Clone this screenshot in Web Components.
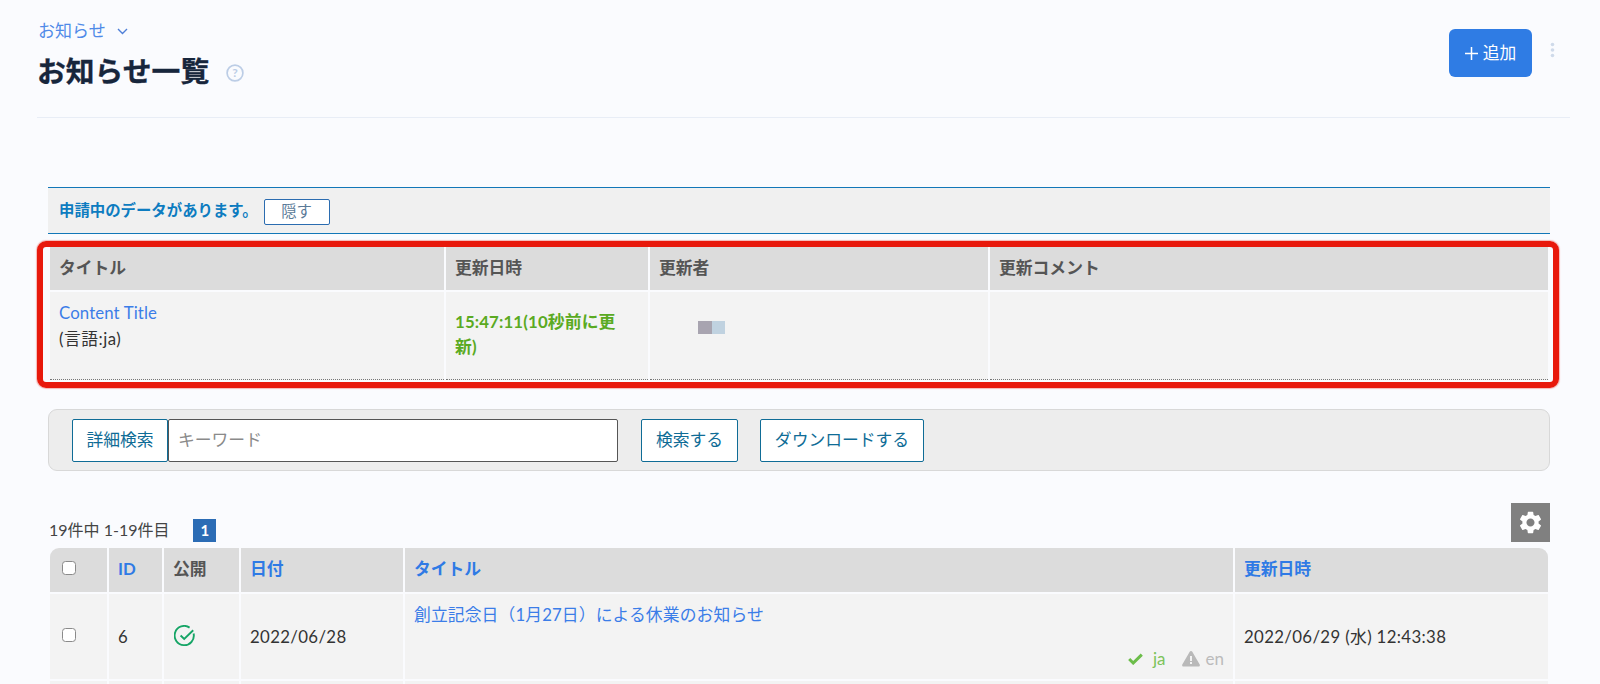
<!DOCTYPE html>
<html lang="ja">
<head>
<meta charset="utf-8">
<title>お知らせ一覧</title>
<style>
  html, body { margin: 0; height: 684px; overflow: hidden; background: #fafbfe; }
  body { font: 16.8px/1.5 Lato, "Noto Sans CJK JP", sans-serif; color: #333; }
  a { color: #3b7de8; text-decoration: none; letter-spacing: .12px; }
  .updated { color: #5aaa22; font-weight: 700; letter-spacing: .15px; }
  .sortable { color: #2f7ae5; }
  .wide { letter-spacing: .35px; }
  .mask { display: flex; margin: 14px 0 0 48px; padding-top: 15px; }
  .mask i { display: block; width: 13.5px; height: 13px; background: #a8a4b0; }
  .mask i + i { background: #c0d2e0; }
  .lang { position: absolute; right: 9px; bottom: 10px; display: flex; align-items: center; gap: 6px; font-size: 17px; line-height: 20px; }
  .lang span { color: #7cc35b; margin-right: 10px; margin-left: 4px; }
  .lang span.off { color: #bbb; margin: 0; }
  input[type=checkbox] { appearance: none; display: block; width: 14px; height: 14px; margin: 0; background: #fff; border: 1.3px solid #8a8a8a; border-radius: 3.5px; }
</style>
</head>
<body>

<template id="page-head-tpl">
  <style>
    :host { display: flex; justify-content: space-between; height: 117px; margin: 0 30px 0 37px; border-bottom: 1px solid #e8edf6; box-sizing: content-box; }
    .crumb { display: flex; align-items: center; gap: 11px; color: #4f8ae8; height: 20px; margin-top: 21px; margin-left: 1px; font-size: 17px; }
    h1 { display: flex; align-items: center; gap: 17px; margin: 9px 0 0; font-size: 28.8px; line-height: 42px; font-weight: 700; color: #17263c; -webkit-text-stroke: .3px #17263c; }
    .actions { display: flex; align-items: flex-start; padding-top: 29px; }
    .add { display: flex; align-items: center; justify-content: center; gap: 5px; width: 83px; height: 48px; background: #2f7ce4; color: #fff; border-radius: 6px; }
    .kebab { display: block; margin: 13px 15px 0 18px; }
  </style>
  <div>
    <div class="crumb"><span>お知らせ</span>
      <svg width="11" height="7" viewBox="0 0 11 7" fill="none" stroke="#4f7fd8" stroke-width="1.4"><path d="M1 1l4.5 4.5L10 1"/></svg>
    </div>
    <h1><span>お知らせ一覧</span>
      <svg width="18" height="18" viewBox="0 0 18 18" style="margin-top:4px"><circle cx="9" cy="9" r="7.9" fill="none" stroke="#bccde6" stroke-width="1.7"/><text x="9" y="13.2" text-anchor="middle" font-family="Lato, sans-serif" font-size="12" font-weight="700" fill="#bccde6">?</text></svg>
    </h1>
  </div>
  <div class="actions">
    <div class="add"><svg width="13" height="13" viewBox="0 0 13 13" stroke="#fff" stroke-width="1.5"><path d="M6.5 0v13M0 6.5h13"/></svg><span>追加</span></div>
    <svg class="kebab" width="5" height="16" viewBox="0 0 5 16" fill="#cfdaea"><circle cx="2.5" cy="2.5" r="1.8"/><circle cx="2.5" cy="8" r="1.8"/><circle cx="2.5" cy="13.5" r="1.8"/></svg>
  </div>
</template>

<template id="notice-bar-tpl">
  <style>
    :host { display: flex; align-items: center; gap: 6px; height: 45px; margin: 69px 50px 0 48px; padding-left: 11px; background: #f0f0f0; border-top: 1px solid #1277b8; border-bottom: 1px solid #1277b8; font-size: 15.4px; }
    b { color: #0d7cc0; }
    span { display: flex; align-items: center; justify-content: center; box-sizing: border-box; width: 66px; height: 26px; margin-top: 3px; background: #fff; border: 1px solid #2b6cb0; border-radius: 2px; color: #5a7a98; }
  </style>
  <b><slot></slot></b><span>隠す</span>
</template>

<template id="data-grid-tpl">
  <style>
    :host { display: grid; gap: 2px; margin: 0 52px 0 50px; }
    :host([rounded]) { border-radius: 9px 9px 0 0; overflow: hidden; }
  </style>
  <slot></slot>
</template>

<template id="grid-cell-tpl">
  <style>
    :host { display: flex; align-items: center; position: relative; box-sizing: border-box; padding: 0 9px; background: #f3f3f3; color: #333; }
    :host([head]) { background: #dcdcdc; color: #555; font-weight: 700; min-height: 43px; padding-bottom: 1px; }
    :host([dotted]) { border-bottom: 1px dotted #777; }
    :host([top]) { align-items: flex-start; }
  </style>
  <slot></slot>
</template>

<template id="search-bar-tpl">
  <style>
    :host { display: flex; align-items: center; height: 60px; margin: 29px 50px 0 48px; padding-left: 23px; background: #ededed; border: 1px solid #d8d8d8; border-radius: 9px; box-sizing: content-box; width: 1477px; color: #0f6c96; }
    .b { display: flex; align-items: center; justify-content: center; box-sizing: border-box; height: 43px; background: #fff; border: 1px solid #0f6c96; border-radius: 2px; padding: 0 13px; }
    .kw { box-sizing: border-box; width: 450px; height: 43px; padding-left: 9px; display: flex; align-items: center; background: #fff; border: 1px solid #555; border-radius: 2px; color: #8a8a8a; }
  </style>
  <div class="b" style="width:96px">詳細検索</div>
  <div class="kw">キーワード</div>
  <div class="b" style="width:97px;margin-left:23px">検索する</div>
  <div class="b" style="width:164px;margin-left:22px">ダウンロードする</div>
</template>

<template id="list-bar-tpl">
  <style>
    :host { display: flex; align-items: flex-end; height: 39px; margin: 32px 50px 6px 49px; font-size: 16px; color: #444; }
    .page { display: flex; align-items: center; justify-content: center; width: 23px; height: 23px; margin-left: 24px; background: #2b6cb5; color: #fff; font-weight: 700; font-size: 15px; }
    .gear { display: flex; align-items: center; justify-content: center; width: 39px; height: 39px; margin-left: auto; background: #808080; }
  </style>
  <span><slot></slot></span>
  <span class="page">1</span>
  <span class="gear">
    <svg width="27" height="27" viewBox="0 0 24 24" fill="#fff"><path fill-rule="evenodd" d="M19.14 12.94c.04-.3.06-.61.06-.94 0-.32-.02-.64-.07-.94l2.03-1.58c.18-.14.23-.41.12-.61l-1.92-3.32c-.12-.22-.37-.29-.59-.22l-2.39.96c-.5-.38-1.03-.7-1.62-.94l-.36-2.54c-.04-.24-.24-.41-.48-.41h-3.84c-.24 0-.43.17-.47.41l-.36 2.54c-.59.24-1.13.57-1.62.94l-2.39-.96c-.22-.08-.47 0-.59.22L2.74 8.87c-.12.21-.08.47.12.61l2.03 1.58c-.05.3-.09.63-.09.94s.02.64.07.94l-2.03 1.58c-.18.14-.23.41-.12.61l1.92 3.32c.12.22.37.29.59.22l2.39-.96c.5.38 1.03.7 1.62.94l.36 2.54c.05.24.24.41.48.41h3.84c.24 0 .44-.17.47-.41l.36-2.54c.59-.24 1.13-.56 1.62-.94l2.39.96c.22.08.47 0 .59-.22l1.92-3.32c.12-.22.07-.47-.12-.61l-2.01-1.58zM12 15.6c-1.98 0-3.6-1.62-3.6-3.6s1.62-3.6 3.6-3.6 3.6 1.62 3.6 3.6-1.62 3.6-3.6 3.6z"/></svg>
  </span>
</template>

<template id="red-frame-tpl">
  <style>
    :host { position: absolute; left: 37px; top: 241px; width: 1522px; height: 147px; box-sizing: border-box; border: 6px solid #e8190c; border-radius: 9px; box-shadow: 0 0 1px 1px rgba(232,25,12,.3); pointer-events: none; }
  </style>
</template>

<page-head></page-head>

<notice-bar>申請中のデータがあります。</notice-bar>

<data-grid columns="394px 202px 338px 558px" style="margin-top:13px">
  <grid-cell head>タイトル</grid-cell>
  <grid-cell head>更新日時</grid-cell>
  <grid-cell head>更新者</grid-cell>
  <grid-cell head>更新コメント</grid-cell>
  <grid-cell dotted top style="height:88px;padding-top:8px"><div style="line-height:26px"><a href="#">Content Title</a><br><span style="letter-spacing:.5px">(言語:ja)</span></div></grid-cell>
  <grid-cell dotted style="padding-right:24px;padding-bottom:3px"><span class="updated">15:47:11(10秒前に更新)</span></grid-cell>
  <grid-cell dotted top style="padding:0"><div class="mask"><i></i><i></i></div></grid-cell>
  <grid-cell dotted></grid-cell>
</data-grid>

<search-bar></search-bar>

<list-bar>19件中 1-19件目</list-bar>

<data-grid rounded columns="57px 53px 75px 162px 828px 313px">
  <grid-cell head style="min-height:44px;padding-left:12px;padding-bottom:4px"><input type="checkbox"></grid-cell>
  <grid-cell head class="sortable" style="padding-bottom:2px">ID</grid-cell>
  <grid-cell head style="padding-bottom:2px">公開</grid-cell>
  <grid-cell head class="sortable" style="padding-bottom:2px">日付</grid-cell>
  <grid-cell head class="sortable" style="padding-bottom:2px">タイトル</grid-cell>
  <grid-cell head class="sortable" style="padding-bottom:2px">更新日時</grid-cell>

  <grid-cell style="height:85px;padding-left:12px;padding-bottom:4px"><input type="checkbox"></grid-cell>
  <grid-cell>6</grid-cell>
  <grid-cell style="padding-left:10px;padding-bottom:2px">
    <svg width="22" height="22" viewBox="0 0 22 22" fill="none" stroke="#16a566" stroke-width="1.9"><path d="M19.6 8.5A9.6 9.6 0 1 1 15.6 2.6"/><path d="M6.6 10.5l3.6 3.4 9-8.6"/></svg>
  </grid-cell>
  <grid-cell class="wide">2022/06/28</grid-cell>
  <grid-cell top style="padding-top:8px">
    <a href="#">創立記念日（1月27日）による休業のお知らせ</a>
    <div class="lang">
      <svg width="15" height="12" viewBox="0 0 15 12" fill="none" stroke="#6cbd4a" stroke-width="3"><path d="M1.2 6l4 4L13.8 1.6"/></svg><span>ja</span>
      <svg width="18" height="16" viewBox="0 0 18 16"><path fill-rule="evenodd" fill="#b9b9b9" d="M9 0c.6 0 1 .3 1.3.8l7.4 12.8c.5.9-.1 2-1.2 2H1.5c-1.1 0-1.7-1.1-1.2-2L7.7.8C8 .3 8.4 0 9 0zM8 5v5h2V5zm0 6v2h2v-2z"/></svg><span class="off">en</span>
    </div>
  </grid-cell>
  <grid-cell class="wide">2022/06/29 (水) 12:43:38</grid-cell>

  <grid-cell style="height:20px"></grid-cell><grid-cell></grid-cell><grid-cell></grid-cell><grid-cell></grid-cell><grid-cell></grid-cell><grid-cell></grid-cell>
</data-grid>

<red-frame></red-frame>

<script>
  // every element just clones its template into an open shadow root
  class TemplateElement extends HTMLElement {
    constructor() {
      super();
      const tpl = document.getElementById(this.localName + '-tpl');
      this.attachShadow({ mode: 'open' }).appendChild(tpl.content.cloneNode(true));
    }
  }
  class DataGrid extends TemplateElement {
    connectedCallback() {
      this.style.gridTemplateColumns = this.getAttribute('columns');
    }
  }
  ['page-head', 'notice-bar', 'grid-cell', 'search-bar', 'list-bar', 'red-frame'].forEach((name) => {
    customElements.define(name, class extends TemplateElement {});
  });
  customElements.define('data-grid', DataGrid);
</script>
</body>
</html>
